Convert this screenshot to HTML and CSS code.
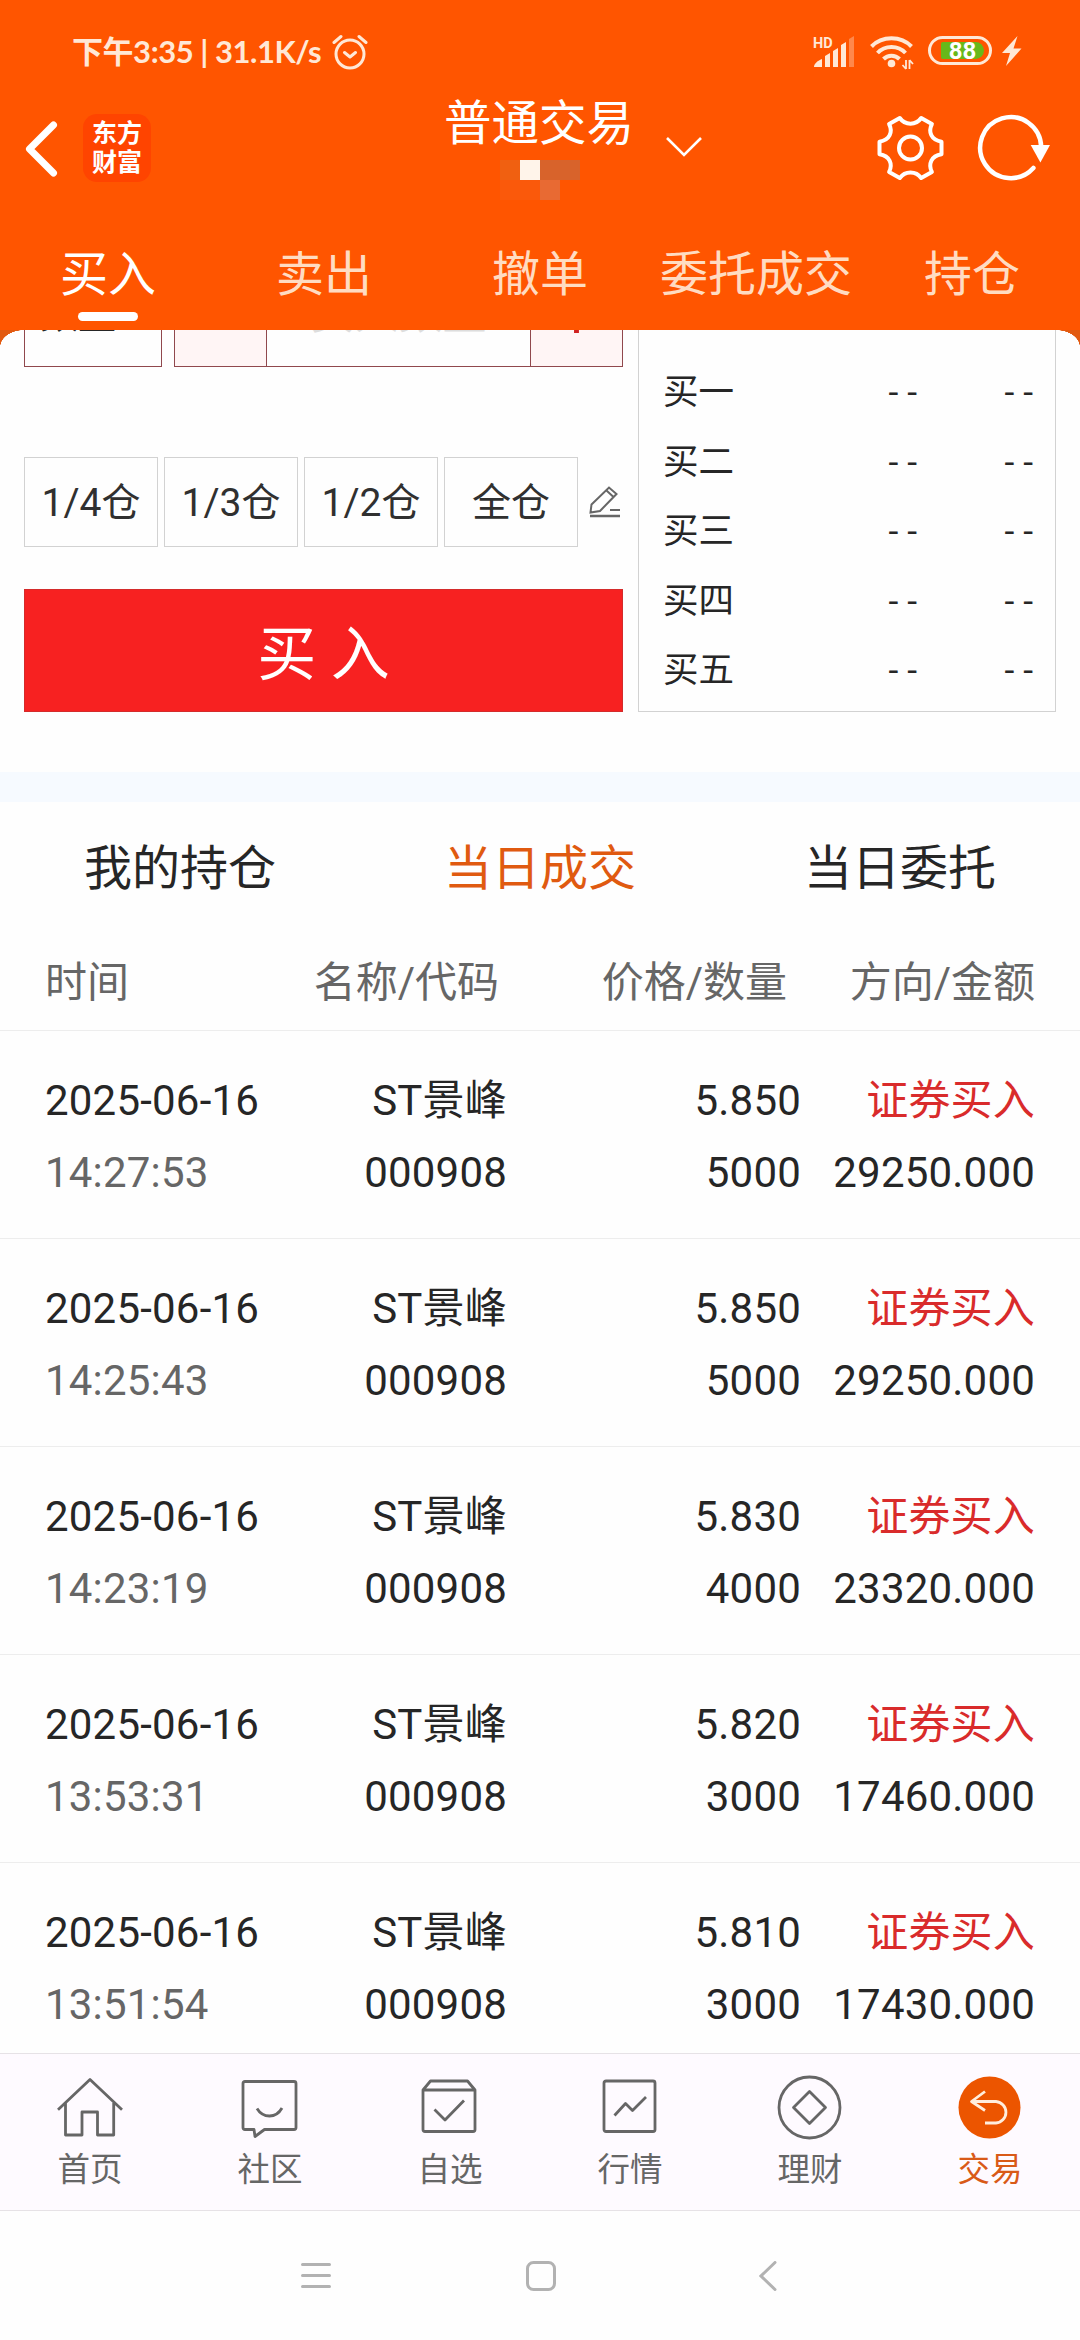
FILE: index.html
```html
<!DOCTYPE html>
<html lang="zh-CN">
<head>
    <meta charset="UTF-8">
    <meta name="viewport" content="width=device-width, initial-scale=1.0">
    <title>普通交易</title>
    <link rel="stylesheet" href="styles.css">
</head>
<body>
    <header>
        <div class="status-bar">
            <span class="clock">下午3:35 | 31.1K/s</span>
            <svg class="alarm" width="36" height="36" viewBox="0 0 36 36" fill="none" stroke="#ffe8d6" stroke-width="3" stroke-linecap="round" stroke-linejoin="round">
                <circle cx="18" cy="20" r="14"/>
                <path d="M12.500 18.500l5.500 4.500 5.500-4.500M2 8.500l7-6M34 8.500l-7-6"/>
            </svg>
            <div class="status-icons">
                <svg width="42" height="32" viewBox="0 0 42 32" fill="#ffe8d6">
                    <text class="hd" x="0" y="11.500">HD</text>
                    <path d="M1 31c0-3 3-6 8-8v8zM12 20l5-3v14h-5zM20 15l5-3v19h-5zM28 9l5-3v25h-5z"/>
                    <path d="M36 3l5-3v31h-5z" opacity=".35"/>
                </svg>
                <svg class="wifi" width="44" height="34" viewBox="0 0 44 34" fill="none" stroke="#ffe8d6" stroke-width="4">
                    <path d="M1.500 10.500C12-.5 31-.5 41.500 10.500M7.500 17C15 9 28 9 35.500 17M13.500 23c4.500-4.500 11.500-4.500 16 0"/>
                    <circle cx="21.500" cy="27.500" r="3.800" fill="#ffe8d6" stroke="none"/>
                    <path d="M36 24v9M39.500 33v-9M36 33l-3.500-4M39.500 24l3.500 4" stroke-width="1.800"/>
                </svg>
                <div class="battery"><span>88</span></div>
                <svg class="bolt" width="20" height="30" viewBox="0 0 20 30" fill="#ffe8d6"><path d="M15.500 0L0 17h8L4 30 19.500 12.500h-8z"/></svg>
            </div>
        </div>

        <div class="title-bar">
            <svg class="back" width="34" height="58" viewBox="0 0 34 58" fill="none" stroke="#fff" stroke-width="7" stroke-linecap="round" stroke-linejoin="round"><path d="M28.500 5L4.500 29l24 24"/></svg>
            <div class="logo">东方<br>财富</div>
            <div class="title">
                <h1>普通交易</h1>
                <div class="mosaic"><i class="m1"></i><i class="m2"></i><i class="m3"></i><i class="m3"></i><i class="m4"></i><i class="m4"></i><i class="m5"></i></div>
            </div>
            <svg class="chevron" width="38" height="22" viewBox="0 0 38 22" fill="none" stroke="#fff" stroke-width="2.600"><path d="M2 2l17 17L36 2"/></svg>
            <svg class="gear" width="68" height="68" viewBox="0 0 68 68" fill="none" stroke="#fff" stroke-width="4" stroke-linejoin="round">
                <path d="M22.800 4C28 11.500 39 11.500 44.200 4L54.900 10C51 18 54 26 64.500 27.700V40.300C54 42 51 50 54.900 58L44.200 64C39 56.500 28 56.500 22.800 64L12.100 58C16 50 13 42 2.500 40.300V27.700C13 26 16 18 12.100 10Z"/>
                <circle cx="33.500" cy="34" r="11.500"/>
            </svg>
            <svg class="refresh" width="74" height="68" viewBox="0 0 74 68" fill="none" stroke="#fff" stroke-width="4.500" stroke-linecap="round">
                <path d="M64.200 33A30.500 30.500 0 1 0 56.400 54"/>
                <path d="M53.700 31H73L63.400 48.500z" fill="#fff" stroke="none"/>
            </svg>
        </div>

        <nav class="trade-tabs">
            <a class="active">买入</a>
            <a>卖出</a>
            <a>撤单</a>
            <a>委托成交</a>
            <a>持仓</a>
        </nav>
    </header>

    <main>
        <div class="corners"></div>
        <section class="trade">
            <div class="order-form">
                <div class="qty-row">
                    <div class="qty-type">数量</div>
                    <div class="stepper">
                        <span class="step"></span>
                        <span class="qty-input">买入数量</span>
                        <span class="step">+</span>
                    </div>
                </div>
                <div class="ratios">
                    <span class="ratio">1/4仓</span>
                    <span class="ratio">1/3仓</span>
                    <span class="ratio">1/2仓</span>
                    <span class="ratio">全仓</span>
                    <svg width="32" height="32" viewBox="0 0 32 32" fill="none" stroke="#666" stroke-width="2">
                        <path d="M1.500 26.500l1-8L20 1.500l7.500 6.500L11 25zM17.500 4.500l7 6.500M21 24h10"/>
                        <path d="M1 30h30" stroke-width="2.500"/>
                    </svg>
                </div>
                <div class="buy-btn">买 入</div>
            </div>
            <div class="quotes">
                <div class="quote"><span>买一</span><span>- -</span><span>- -</span></div>
                <div class="quote"><span>买二</span><span>- -</span><span>- -</span></div>
                <div class="quote"><span>买三</span><span>- -</span><span>- -</span></div>
                <div class="quote"><span>买四</span><span>- -</span><span>- -</span></div>
                <div class="quote"><span>买五</span><span>- -</span><span>- -</span></div>
            </div>
        </section>

        <nav class="list-tabs">
            <a>我的持仓</a>
            <a class="active">当日成交</a>
            <a>当日委托</a>
        </nav>

        <div class="list-head">
            <span>时间</span>
            <span>名称/代码</span>
            <span>价格/数量</span>
            <span>方向/金额</span>
        </div>
        <div class="deal">
            <div>2025-06-16<br><span class="time">14:27:53</span></div>
            <div>ST景峰<br>000908</div>
            <div>5.850<br>5000</div>
            <div><span class="buy">证券买入</span><br>29250.000</div>
        </div>
        <div class="deal">
            <div>2025-06-16<br><span class="time">14:25:43</span></div>
            <div>ST景峰<br>000908</div>
            <div>5.850<br>5000</div>
            <div><span class="buy">证券买入</span><br>29250.000</div>
        </div>
        <div class="deal">
            <div>2025-06-16<br><span class="time">14:23:19</span></div>
            <div>ST景峰<br>000908</div>
            <div>5.830<br>4000</div>
            <div><span class="buy">证券买入</span><br>23320.000</div>
        </div>
        <div class="deal">
            <div>2025-06-16<br><span class="time">13:53:31</span></div>
            <div>ST景峰<br>000908</div>
            <div>5.820<br>3000</div>
            <div><span class="buy">证券买入</span><br>17460.000</div>
        </div>
        <div class="deal">
            <div>2025-06-16<br><span class="time">13:51:54</span></div>
            <div>ST景峰<br>000908</div>
            <div>5.810<br>3000</div>
            <div><span class="buy">证券买入</span><br>17430.000</div>
        </div>
    </main>

    <footer>
        <nav class="bottom-nav">
            <a>
                <svg viewBox="0 0 66 66"><path d="M1 34.700L33 4.500l32 30.200M8.500 28v32H25V37h15.500v23h16.200V28"/></svg>
                首页
            </a>
            <a>
                <svg viewBox="0 0 66 66"><path d="M8 6.500h49q2 0 2 2v44q0 2-2 2H27.500L18 61.500l-1-7H8q-2 0-2-2v-44q0-2 2-2zM20 33.500q4.500 7.500 12.500 7.500t12.500-8"/></svg>
                社区
            </a>
            <a>
                <svg viewBox="0 0 66 66"><path d="M6 15l7.500-9h37l7.500 9v39.500q0 2-2 2H8q-2 0-2-2zH58M17.500 34.500L28 45l19-19.500"/></svg>
                自选
            </a>
            <a>
                <svg viewBox="0 0 66 66"><rect x="7" y="6" width="51" height="50.500" rx="2"/><path d="M17.500 40.500l11-12 7 7L49 22"/></svg>
                行情
            </a>
            <a>
                <svg viewBox="0 0 66 66"><circle cx="32.500" cy="32.500" r="30.500"/><path d="M32.500 16.500l16 16-16 16-16-16z"/></svg>
                理财
            </a>
            <a class="active">
                <svg viewBox="0 0 66 66"><circle cx="32.500" cy="32.500" r="31" fill="#ec5500" stroke="none"/><path d="M28 16.500l-13.500 10 13.500 9M14.500 26.500H39a11 10.800 0 0 1 0 21.500H28" stroke="#ffeedd"/></svg>
                交易
            </a>
        </nav>
        <div class="system-nav">
            <svg width="30" height="26" viewBox="0 0 30 26"><path d="M1.500 1.500h27M1.500 12.500h27M1.500 23.500h27"/></svg>
            <svg width="30" height="30" viewBox="0 0 30 30"><rect x="1.500" y="1.500" width="27" height="27" rx="6"/></svg>
            <svg width="18" height="30" viewBox="0 0 18 30"><path d="M16 1.500L2 15l14 13.500"/></svg>
        </div>
    </footer>
</body>
</html>
```

FILE: styles.css
```css
:root {
    --orange: #ff5500;
    --text: #262626;
    --grey: #666;
    --line: #ededed;
}
* {
    box-sizing: border-box;
}
body {
    margin: 0;
    height: 2340px;
    display: flex;
    flex-direction: column;
    overflow: hidden;
    background: #fefefe;
    color: var(--text);
    font-family: Roboto, "Noto Sans CJK SC", sans-serif;
}
svg {
    display: block;
    flex: none;
}

/* header */
header {
    flex: none;
    height: 330px;
    background: var(--orange);
    color: #fff;
}
.status-bar {
    display: flex;
    height: 92px;
    padding: 34px 58px 0 72px;
    color: #ffe8d6;
}
.clock {
    width: 260px;
    font: 700 31px/34px Lato, "Noto Sans CJK SC", sans-serif;
    letter-spacing: -.45px;
    white-space: nowrap;
}
.status-icons {
    display: flex;
    margin-left: auto;
    padding-top: 2px;
}
.hd {
    font: bold 14.5px Roboto, sans-serif;
}
.wifi {
    margin-left: 15px;
}
.battery {
    width: 64px;
    height: 29px;
    margin-left: 14px;
    padding: 4px 5px 4px 10px;
    border: 3px solid #ffe8d6;
    border-radius: 15px;
}
.battery span {
    display: block;
    height: 17px;
    margin-top: -1px;
    border-radius: 2px 9px 9px 2px;
    background: #68b81a;
    color: #fff;
    font: bold 24px/18px Roboto, sans-serif;
    text-align: center;
}
.bolt {
    margin-left: 10px;
}
.title-bar {
    display: flex;
    height: 122px;
    padding-left: 25px;
}
.back {
    margin-top: 28px;
}
.logo {
    width: 68px;
    height: 68px;
    margin: 22px 0 0 24px;
    padding-top: 3px;
    border-radius: 14px;
    background: #ff4400;
    font: bold 25px/29px "Noto Sans CJK SC", sans-serif;
    text-align: center;
}
.title {
    width: 192px;
    margin-left: 292px;
}
h1 {
    height: 68px;
    margin: 0;
    padding-left: 1px;
    font-size: 47.5px;
    font-weight: 400;
    line-height: 64px;
}
.mosaic {
    display: grid;
    grid-template-columns: repeat(4, 20px);
    grid-auto-rows: 20px;
    margin-left: 57px;
}
.m1 { background: #f06011; }
.m2 { background: #fff4ea; }
.m3 { background: #d8632b; }
.m4 { background: #fa590b; }
.m5 { background: #e86a33; }
.chevron {
    margin: 44px 0 0 30px;
}
.gear {
    margin: 22px 0 0 174px;
}
.refresh {
    margin: 22px 0 0 32px;
}
.trade-tabs {
    display: flex;
}
.trade-tabs a {
    flex: 1;
    height: 116px;
    color: #ffdcc2;
    font-size: 48px;
    line-height: 121px;
    text-align: center;
}
.trade-tabs .active {
    color: #fff;
}
.trade-tabs .active::after {
    content: "";
    display: block;
    width: 60px;
    height: 9px;
    margin: -23px auto 0;
    border-radius: 5px;
    background: #fff;
}

/* content */
main {
    height: 1723px;
    flex: none;
    overflow: hidden;
}
.corners {
    height: 15px;
    margin-bottom: -15px;
    background: radial-gradient(ellipse 24px 17px at 24px 17px, #fefefe 98%, #e25a10 100%) left / 24px 15px no-repeat,
                radial-gradient(ellipse 24px 17px at 0 17px, #fefefe 98%, #e25a10 100%) right / 24px 15px no-repeat;
}
.trade {
    display: flex;
    height: 442px;
    padding: 0 24px;
    gap: 15px;
}
.order-form {
    width: 599px;
}
.qty-row {
    display: flex;
    gap: 12px;
    height: 90px;
    margin-top: -53px;
}
.qty-type,
.stepper {
    border: 1px solid #90484d;
}
.qty-type {
    width: 138px;
    font-size: 38px;
    line-height: 74px;
    padding-left: 15px;
}
.stepper {
    display: flex;
    flex: 1;
}
.step {
    width: 91px;
    background: #fff5f5;
    color: #d02020;
    font-size: 54px;
    line-height: 82px;
    text-align: center;
}
.qty-input {
    flex: 1;
    border: solid #90484d;
    border-width: 0 1px;
    color: #ddd;
    font-size: 44px;
    line-height: 72px;
    text-align: center;
}
.ratios {
    display: flex;
    align-items: center;
    gap: 6px;
    height: 90px;
    margin-top: 90px;
}
.ratio {
    width: 134px;
    height: 90px;
    border: 1px solid #d2d2d2;
    color: #303030;
    font-size: 39px;
    line-height: 91px;
    text-align: center;
}
.ratios svg {
    margin-left: 5px;
}
.buy-btn {
    height: 123px;
    margin-top: 42px;
    background: #f72121;
    border: 1px solid #d42b2b;
    color: #fff;
    font-size: 59px;
    line-height: 130px;
    text-align: center;
}
.quotes {
    width: 418px;
    height: 382px;
    padding: 27px 22px 0 24px;
    border: 1px solid #d2d2d2;
    border-top: 0;
}
.quote {
    display: grid;
    grid-template-columns: 1fr 60px 116px;
    height: 69.6px;
    font-size: 35.5px;
    line-height: 70px;
}
.quote span + span {
    text-align: right;
}
.list-tabs {
    display: flex;
    height: 161px;
    border-top: 30px solid #f6faff;
}
.list-tabs a {
    flex: 1;
    font-size: 48px;
    line-height: 134px;
    text-align: center;
}
.list-tabs .active {
    color: #e05a10;
}
.list-head,
.deal {
    display: grid;
    padding: 0 45px;
    border-bottom: 1px solid var(--line);
    text-align: right;
}
.list-head {
    grid-template-columns: 200px 254px 288px 1fr;
    height: 98px;
    color: var(--grey);
    font-size: 42px;
    line-height: 100px;
}
.deal {
    grid-template-columns: 230px 232px 294px 1fr;
    height: 208px;
    padding-top: 34px;
    font-size: 42px;
    line-height: 72px;
    letter-spacing: .2px;
}
.list-head :first-child,
.deal :first-child {
    text-align: left;
}
.time {
    color: var(--grey);
}
.buy {
    color: #d92b2b;
}

/* bottom bars */
footer {
    flex: none;
}
.bottom-nav {
    display: flex;
    height: 158px;
    border: solid #e6e2e6;
    border-width: 1px 0;
    background: #fefaff;
}
.bottom-nav a {
    display: flex;
    flex: 1;
    flex-direction: column;
    align-items: center;
    padding-top: 21px;
    color: var(--grey);
    font-size: 32.5px;
    line-height: 59px;
}
.bottom-nav svg {
    width: 66px;
    height: 66px;
    fill: none;
    stroke: #666;
    stroke-width: 2.8;
    stroke-linejoin: round;
}
.bottom-nav .active {
    color: #d95a18;
}
.system-nav {
    display: flex;
    align-items: center;
    height: 129px;
    padding-left: 301px;
    fill: none;
    stroke: #b2b2b2;
    stroke-width: 3;
    stroke-linecap: round;
}
.system-nav svg + svg {
    margin-left: 195px;
}
.system-nav svg:last-child {
    margin-left: 203px;
}
```
